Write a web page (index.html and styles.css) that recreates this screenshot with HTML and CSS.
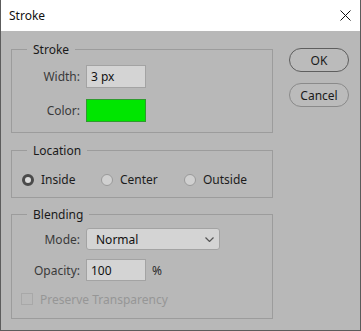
FILE: index.html
```html
<!DOCTYPE html>
<html lang="en">
<head>
    <meta charset="UTF-8">
    <title>Stroke</title>
    <link rel="stylesheet" href="styles.css">
</head>
<body>
    <div class="window">
        <div class="titlebar">
            <span class="title">Stroke</span>
            <svg class="close" width="11" height="11" viewBox="0 0 11 11">
                <path d="M0.5 0.5 L10.5 10.5 M10.5 0.5 L0.5 10.5" stroke="#111" stroke-width="1" fill="none"/>
            </svg>
        </div>

        <div class="main">
            <div class="panels">
                <fieldset class="group stroke-group">
                    <legend>Stroke</legend>
                    <div class="row">
                        <span class="label">Width:</span>
                        <div class="field">3 px</div>
                    </div>
                    <div class="row">
                        <span class="label">Color:</span>
                        <div class="swatch"></div>
                    </div>
                </fieldset>

                <fieldset class="group location-group">
                    <legend>Location</legend>
                    <div class="radios">
                        <div class="radio-option">
                            <span class="radio checked"></span>
                            <span>Inside</span>
                        </div>
                        <div class="radio-option">
                            <span class="radio"></span>
                            <span>Center</span>
                        </div>
                        <div class="radio-option">
                            <span class="radio"></span>
                            <span>Outside</span>
                        </div>
                    </div>
                </fieldset>

                <fieldset class="group blending-group">
                    <legend>Blending</legend>
                    <div class="row">
                        <span class="label">Mode:</span>
                        <div class="select">
                            <span>Normal</span>
                            <svg width="9" height="5" viewBox="0 0 9 5">
                                <path d="M0.5 0.5 L4.5 4.5 L8.5 0.5" stroke="#555" stroke-width="1.2" fill="none"/>
                            </svg>
                        </div>
                    </div>
                    <div class="row opacity-row">
                        <span class="label">Opacity:</span>
                        <div class="field">100</div>
                        <span class="unit">%</span>
                    </div>
                    <div class="check-row">
                        <span class="checkbox"></span>
                        <span>Preserve Transparency</span>
                    </div>
                </fieldset>
            </div>

            <div class="buttons">
                <button class="btn default">OK</button>
                <button class="btn">Cancel</button>
            </div>
        </div>
    </div>
</body>
</html>
```

FILE: styles.css
```css
* {
    margin: 0;
    padding: 0;
    box-sizing: border-box;
}

body {
    font-family: 'Noto Sans', 'Open Sans', sans-serif;
    font-size: 12px;
    color: #1c1c1c;
    background: #b8b8b8;
}

.window {
    width: 361px;
    height: 331px;
    background: #b8b8b8;
    border: 1px solid #5c5c5c;
    border-top: none;
}

.titlebar {
    height: 31px;
    background: #ffffff;
    display: flex;
    align-items: center;
    justify-content: space-between;
    padding: 0 9px 0 8px;
}

.title {
    color: #111;
}

.main {
    display: flex;
    gap: 16px;
    padding: 10px 11px 0 10px;
}

.panels {
    width: 262px;
    display: flex;
    flex-direction: column;
}

.group {
    border: 1px solid #9c9c9c;
    padding: 0 0 10px 0;
}

.group legend {
    margin-left: 15px;
    padding: 0 6px;
    line-height: 17px;
    color: #1a1a1a;
}

.stroke-group {
    padding-top: 7px;
}

.location-group {
    margin-top: 9px;
    padding-top: 12px;
}

.blending-group {
    margin-top: 8px;
    padding-top: 5px;
    padding-bottom: 11px;
}

.row {
    display: flex;
    align-items: center;
    gap: 6px;
    height: 23px;
}

.row + .row {
    margin-top: 11px;
}

.blending-group .row {
    height: 22px;
}

.blending-group .row + .row {
    margin-top: 9px;
}

.label {
    width: 68px;
    text-align: right;
    color: #3a3a3a;
}

.field {
    width: 60px;
    height: 100%;
    background: #d4d4d4;
    border: 1px solid #a3a3a3;
    padding-left: 4px;
    display: flex;
    align-items: center;
    color: #111;
}

.swatch {
    width: 60px;
    height: 100%;
    background: #00e600;
    border: 1px solid #2f9a2f;
}

.select {
    width: 134px;
    height: 100%;
    background: #d4d4d4;
    border: 1px solid #a3a3a3;
    border-radius: 3px;
    padding: 0 5px 0 9px;
    display: flex;
    align-items: center;
    justify-content: space-between;
    color: #111;
}

.unit {
    color: #2a2a2a;
}

.radios {
    display: grid;
    grid-template-columns: 79px 83px auto;
    height: 16px;
    padding-left: 10px;
    align-items: center;
}

.radio-option {
    display: flex;
    align-items: center;
    gap: 7px;
}

.radio {
    width: 12px;
    height: 12px;
    border-radius: 50%;
    background: #d0d0d0;
    border: 1px solid #9a9a9a;
}

.radio.checked {
    background: #dcdcdc;
    border: 3.5px solid #4a4a4a;
}

.check-row {
    display: flex;
    align-items: center;
    gap: 7px;
    margin-top: 10px;
    height: 16px;
    padding-left: 9px;
    color: #969696;
}

.checkbox {
    width: 12px;
    height: 12px;
    border: 1px solid #a8a8a8;
}

.buttons {
    width: 60px;
    margin-top: 7px;
    display: flex;
    flex-direction: column;
    gap: 11px;
}

.btn {
    height: 24px;
    border-radius: 12px;
    background: #bbbbbb;
    border: 1px solid #8a8a8a;
    font-family: inherit;
    font-size: 12px;
    color: #1a1a1a;
}

.btn.default {
    border-color: #5e5e5e;
}
```
